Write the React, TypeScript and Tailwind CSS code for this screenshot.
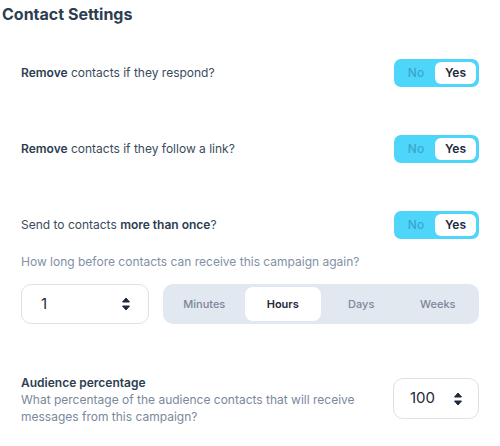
import { useState } from 'react'

function YesNo({ value = true }: { value?: boolean }) {
  return (
    <div className="flex h-[28px] w-[85px] items-center rounded-[7px] bg-[#4dd5fa] p-[3px]">
      <span className={`flex h-full flex-1 items-center justify-center rounded-[6px] text-[12px] font-medium ${!value ? 'bg-white text-[#1e293b]' : 'text-[#3aa7cc]'}`}>
        No
      </span>
      <span className={`flex h-full w-[41px] items-center justify-center rounded-[6px] text-[12px] font-semibold ${value ? 'bg-white text-[#1e293b]' : 'text-[#3aa7cc]'}`}>
        Yes
      </span>
    </div>
  )
}

function Spinner() {
  return (
    <svg width="10" height="16" viewBox="0 0 10 16" className="text-[#1e293b]">
      <path d="M5 2 L8.5 6 H1.5 Z" fill="currentColor" strokeLinejoin="round" stroke="currentColor" strokeWidth="1" />
      <path d="M5 14 L8.5 10 H1.5 Z" fill="currentColor" strokeLinejoin="round" stroke="currentColor" strokeWidth="1" />
    </svg>
  )
}

const units = ['Minutes', 'Hours', 'Days', 'Weeks']

export default function App() {
  const [unit, setUnit] = useState('Hours')

  return (
    <div className="w-[500px] h-[446px] bg-white text-[#334155]" style={{ fontFamily: 'Inter, "Noto Sans", sans-serif' }}>
      <h2 className="pl-[2px] pt-[2px] text-[16px] font-bold leading-[24px] text-[#2c3e50]">Contact Settings</h2>

      <div className="pl-[21px] pr-[21px]">
        <div className="mt-[33px] flex h-[28px] items-center justify-between">
          <p className="text-[12px] text-[#3b4a5e]">
            <span className="font-semibold text-[#2c3e50]">Remove</span> contacts if they respond?
          </p>
          <YesNo />
        </div>

        <div className="mt-[48px] flex h-[28px] items-center justify-between">
          <p className="text-[12px] text-[#3b4a5e]">
            <span className="font-semibold text-[#2c3e50]">Remove</span> contacts if they follow a link?
          </p>
          <YesNo />
        </div>

        <div className="mt-[48px] flex h-[28px] items-center justify-between">
          <p className="text-[12px] text-[#3b4a5e]">
            Send to contacts <span className="font-semibold text-[#2c3e50]">more than once</span>?
          </p>
          <YesNo />
        </div>

        <p className="mt-[14px] text-[12px] leading-[18px] text-[#8190a5]">
          How long before contacts can receive this campaign again?
        </p>

        <div className="mt-[13px] flex h-[40px] gap-[14px]">
          <div className="flex w-[128px] items-center justify-between rounded-[10px] border border-[#dbe2ea] pl-[19px] pr-[17px]">
            <span className="text-[15px] text-[#1e293b]">1</span>
            <Spinner />
          </div>
          <div className="flex flex-1 items-center rounded-[10px] bg-[#e2e8f0] p-[3px]">
            {units.map((u) => (
              <button
                key={u}
                onClick={() => setUnit(u)}
                className={`flex h-full flex-1 items-center justify-center rounded-[8px] text-[11px] ${unit === u ? 'mx-[2px] bg-white font-semibold text-[#1e293b]' : 'font-medium text-[#7b8799]'}`}
              >
                {u}
              </button>
            ))}
          </div>
        </div>

        <div className="mt-[50px] flex items-start justify-between">
          <div>
            <p className="text-[12px] font-semibold leading-[17px] text-[#2c3e50]">Audience percentage</p>
            <p className="w-[350px] text-[12px] leading-[17px] text-[#7b889b]">
              What percentage of the audience contacts that will receive messages from this campaign?
            </p>
          </div>
          <div className="mt-[4px] flex h-[41px] w-[86px] items-center justify-between rounded-[10px] border border-[#dbe2ea] pl-[16px] pr-[15px]">
            <span className="text-[15px] text-[#1e293b]">100</span>
            <Spinner />
          </div>
        </div>
      </div>
    </div>
  )
}
